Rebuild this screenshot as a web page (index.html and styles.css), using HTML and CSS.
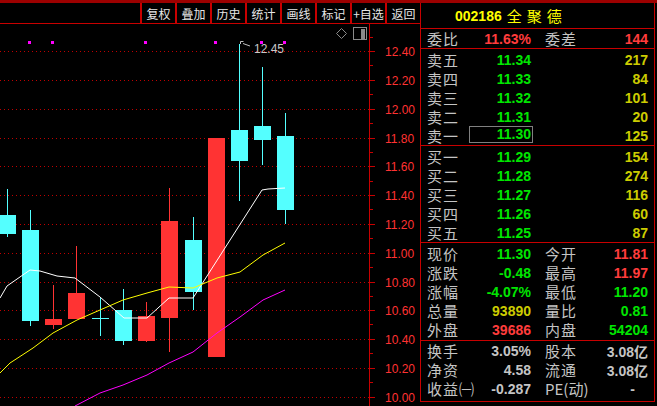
FILE: index.html
```html
<!DOCTYPE html>
<html lang="zh-CN">
<head>
  <meta charset="UTF-8">
  <title>全聚德 日线</title>
  <link rel="stylesheet" href="styles.css">
</head>
<body>

<div class="topbar"></div>
<div class="main">
  <div class="chart-col">
    <div class="toolbar">
      <div class="btn">复权</div>
      <div class="btn">叠加</div>
      <div class="btn">历史</div>
      <div class="btn">统计</div>
      <div class="btn">画线</div>
      <div class="btn">标记</div>
      <div class="btn">+自选</div>
      <div class="btn">返回</div>
    </div>

    <svg class="chart" width="420" height="382" viewBox="0 24 420 382">
      <!-- dotted price grid -->
      <g class="grid">
        <line x1="0" x2="369" y1="51.5" y2="51.5"/>
        <line x1="0" x2="369" y1="80.5" y2="80.5"/>
        <line x1="0" x2="369" y1="109.5" y2="109.5"/>
        <line x1="0" x2="369" y1="138.5" y2="138.5"/>
        <line x1="0" x2="369" y1="166.5" y2="166.5"/>
        <line x1="0" x2="369" y1="195.5" y2="195.5"/>
        <line x1="0" x2="369" y1="224.5" y2="224.5"/>
        <line x1="0" x2="369" y1="253.5" y2="253.5"/>
        <line x1="0" x2="369" y1="282.5" y2="282.5"/>
        <line x1="0" x2="369" y1="310.5" y2="310.5"/>
        <line x1="0" x2="369" y1="339.5" y2="339.5"/>
        <line x1="0" x2="369" y1="368.5" y2="368.5"/>
        <line x1="0" x2="369" y1="397.5" y2="397.5"/>
      </g>

      <!-- price axis -->
      <g class="axis">
        <line x1="369.5" x2="369.5" y1="24" y2="406"/>
        <path d="M369 51.5h6M369 80.5h6M369 109.5h6M369 138.5h6M369 166.5h6M369 195.5h6M369 224.5h6M369 253.5h6M369 282.5h6M369 310.5h6M369 339.5h6M369 368.5h6M369 397.5h6"/>
        <path d="M369 37.5h4M369 65.5h4M369 94.5h4M369 123.5h4M369 152.5h4M369 181.5h4M369 209.5h4M369 238.5h4M369 267.5h4M369 296.5h4M369 324.5h4M369 353.5h4M369 382.5h4"/>
      </g>
      <g class="prices">
        <text x="385" y="56">12.40</text>
        <text x="385" y="85">12.20</text>
        <text x="385" y="114">12.00</text>
        <text x="385" y="143">11.80</text>
        <text x="385" y="171">11.60</text>
        <text x="385" y="200">11.40</text>
        <text x="385" y="229">11.20</text>
        <text x="385" y="258">11.00</text>
        <text x="385" y="287">10.80</text>
        <text x="385" y="315">10.60</text>
        <text x="385" y="344">10.40</text>
        <text x="385" y="373">10.20</text>
        <text x="385" y="402">10.00</text>
      </g>

      <!-- corner icons -->
      <polygon class="icon" points="341.5,28.5 346.5,33.5 341.5,38.5 336.5,33.5"/>
      <rect class="icon" x="353.5" y="27.5" width="13" height="12"/>
      <rect class="icon-fill" x="361" y="29" width="4" height="10"/>

      <!-- signal marks -->
      <g class="marks">
        <rect x="28" y="41" width="3" height="3"/>
        <rect x="51" y="41" width="3" height="3"/>
        <rect x="144" y="41" width="3" height="3"/>
        <rect x="214" y="41" width="3" height="3"/>
        <rect x="260" y="41" width="3" height="3"/>
        <rect x="283" y="41" width="3" height="3"/>
      </g>

      <!-- candles -->
      <g class="down">
        <line x1="7.5" x2="7.5" y1="189" y2="237"/>
        <rect x="-1" y="215" width="17" height="19"/>
        <line x1="30.5" x2="30.5" y1="210" y2="326"/>
        <rect x="22" y="230" width="17" height="91"/>
        <line x1="100.5" x2="100.5" y1="297" y2="336"/>
        <line x1="92" x2="109" y1="318.5" y2="318.5"/>
        <line x1="123.5" x2="123.5" y1="289" y2="345"/>
        <rect x="115" y="310" width="17" height="31"/>
        <line x1="193.5" x2="193.5" y1="217" y2="310"/>
        <rect x="185" y="240" width="17" height="52"/>
        <line x1="239.5" x2="239.5" y1="44" y2="201"/>
        <rect x="231" y="130" width="17" height="31"/>
        <line x1="262.5" x2="262.5" y1="67" y2="165"/>
        <rect x="254" y="126" width="17" height="14"/>
        <line x1="285.5" x2="285.5" y1="113" y2="224"/>
        <rect x="277" y="136" width="17" height="74"/>
      </g>
      <g class="up">
        <line x1="53.5" x2="53.5" y1="285" y2="329"/>
        <rect x="45" y="319" width="17" height="6"/>
        <line x1="76.5" x2="76.5" y1="246" y2="319"/>
        <rect x="68" y="293" width="17" height="26"/>
        <line x1="146.5" x2="146.5" y1="302" y2="342"/>
        <rect x="138" y="316" width="17" height="25"/>
        <line x1="169.5" x2="169.5" y1="188" y2="352"/>
        <rect x="161" y="221" width="17" height="97"/>
        <rect x="208" y="138" width="17" height="219"/>
      </g>

      <!-- moving averages -->
      <polyline class="ma5" points="0,298 7,286 30,270 40,271 57,276 75,278 100,297 124,318 147,318 169,298 193,298 262,190 268,189 285,188"/>
      <polyline class="ma10" points="0,373 10,363 33,348 53,333 77,320 100,310 123,300 147,293 169,287 193,288 217,278 240,272 263,255 285,243"/>
      <polyline class="ma20" points="75,406 100,393 123,385 147,375 169,363 193,352 217,333 240,317 263,300 285,290"/>

      <!-- high marker -->
      <path class="hi-mark" d="M240.5 44V41.5H243.5M243 43.5L250 46"/>
      <text class="hi-text" x="254" y="53">12.45</text>
    </svg>
  </div>

  <div class="quote">
    <div class="q-head">
      <span class="code">002186</span><span class="name">全聚德</span>
    </div>

    <div class="q-sec">
      <div class="q-row"><span class="lbl">委比</span><span class="val red">11.63%</span><span class="lbl2">委差</span><span class="val2 red">144</span></div>
    </div>

    <div class="q-sec pad">
      <div class="q-row"><span class="lbl">卖五</span><span class="val green">11.34</span><span class="lbl2"></span><span class="val2 vol">217</span></div>
      <div class="q-row"><span class="lbl">卖四</span><span class="val green">11.33</span><span class="lbl2"></span><span class="val2 vol">84</span></div>
      <div class="q-row"><span class="lbl">卖三</span><span class="val green">11.32</span><span class="lbl2"></span><span class="val2 vol">101</span></div>
      <div class="q-row"><span class="lbl">卖二</span><span class="val green">11.31</span><span class="lbl2"></span><span class="val2 vol">20</span></div>
      <div class="q-row"><span class="lbl">卖一</span><span class="val green boxed">11.30</span><span class="lbl2"></span><span class="val2 vol">125</span></div>
    </div>

    <div class="q-sec pad">
      <div class="q-row"><span class="lbl">买一</span><span class="val green">11.29</span><span class="lbl2"></span><span class="val2 vol">154</span></div>
      <div class="q-row"><span class="lbl">买二</span><span class="val green">11.28</span><span class="lbl2"></span><span class="val2 vol">274</span></div>
      <div class="q-row"><span class="lbl">买三</span><span class="val green">11.27</span><span class="lbl2"></span><span class="val2 vol">116</span></div>
      <div class="q-row"><span class="lbl">买四</span><span class="val green">11.26</span><span class="lbl2"></span><span class="val2 vol">60</span></div>
      <div class="q-row"><span class="lbl">买五</span><span class="val green">11.25</span><span class="lbl2"></span><span class="val2 vol">87</span></div>
    </div>

    <div class="q-sec pad2">
      <div class="q-row"><span class="lbl">现价</span><span class="val green">11.30</span><span class="lbl2">今开</span><span class="val2 red">11.81</span></div>
      <div class="q-row"><span class="lbl">涨跌</span><span class="val green">-0.48</span><span class="lbl2">最高</span><span class="val2 red">11.97</span></div>
      <div class="q-row"><span class="lbl">涨幅</span><span class="val green">-4.07%</span><span class="lbl2">最低</span><span class="val2 green">11.20</span></div>
      <div class="q-row"><span class="lbl">总量</span><span class="val vol">93890</span><span class="lbl2">量比</span><span class="val2 green">0.81</span></div>
      <div class="q-row"><span class="lbl">外盘</span><span class="val red">39686</span><span class="lbl2">内盘</span><span class="val2 green">54204</span></div>
    </div>

    <div class="q-sec pad3">
      <div class="q-row"><span class="lbl">换手</span><span class="val gray">3.05%</span><span class="lbl2">股本</span><span class="val2 gray">3.08亿</span></div>
      <div class="q-row"><span class="lbl">净资</span><span class="val gray">4.58</span><span class="lbl2">流通</span><span class="val2 gray">3.08亿</span></div>
      <div class="q-row"><span class="lbl">收益㈠</span><span class="val gray">-0.287</span><span class="lbl2 tight">PE(动)</span><span class="val2 gray dash">-</span></div>
    </div>
  </div>
</div>

</body>
</html>
```

FILE: styles.css
```css
* {
  box-sizing: border-box;
  margin: 0;
  padding: 0;
}
body {
  background: #000;
  width: 657px;
  height: 406px;
  overflow: hidden;
  font-family: "Liberation Sans", "Noto Sans CJK SC", sans-serif;
}
.topbar {
  height: 3px;
  background: #9c0000;
}
.main {
  display: flex;
  height: 403px;
}
.chart-col {
  width: 420px;
}
.toolbar {
  height: 21px;
  border-bottom: 1px solid #c80000;
  display: flex;
  justify-content: flex-end;
}
.toolbar .btn {
  width: 35px;
  border-left: 2px solid #c80000;
  color: #e6e6e6;
  font: 12px "Noto Sans CJK SC", sans-serif;
  white-space: nowrap;
  display: flex;
  align-items: center;
  justify-content: center;
}
.chart {
  display: block;
}
.grid line {
  stroke: #c00000;
  stroke-dasharray: 1 3;
}
.axis line, .axis path {
  stroke: #c80000;
  fill: none;
}
.prices text {
  fill: #ff3232;
  font: 12px "Liberation Sans", sans-serif;
}
.icon {
  fill: none;
  stroke: #8a8a8a;
}
.icon-fill {
  fill: #8a8a8a;
}
.marks rect {
  fill: #ff00ff;
}
.down line, .up line, .down rect, .up rect {
  shape-rendering: crispEdges;
}
.down line {
  stroke: #54ffff;
}
.down rect {
  fill: #54ffff;
}
.up line {
  stroke: #ff3333;
}
.up rect {
  fill: #ff3333;
}
.ma5, .ma10, .ma20 {
  fill: none;
  stroke-width: 1;
}
.ma5 { stroke: #ffffff; }
.ma10 { stroke: #ffff00; }
.ma20 { stroke: #ff00ff; }
.hi-mark {
  fill: none;
  stroke: #c0c0c0;
}
.hi-text {
  fill: #c8c8c8;
  font: 12px "Liberation Sans", sans-serif;
}

/* quote panel */
.quote {
  width: 235px;
  height: 399px;
  border-left: 1px solid #c80000;
  border-right: 1px solid #c80000;
  border-bottom: 1px solid #c80000;
  padding: 0 6px;
}
.q-head {
  height: 26px;
  margin: 0 -6px;
  padding-left: 34px;
  border-bottom: 1px solid #c80000;
  display: flex;
  align-items: center;
  color: #ffff00;
}
.q-head .code {
  font-weight: bold;
  font-size: 14px;
}
.q-head .name {
  margin-left: 5px;
  font: 15px "Noto Sans CJK SC", sans-serif;
  letter-spacing: 5px;
}
.q-sec {
  margin: 0 -6px;
  padding: 0 6px;
  border-bottom: 1px solid #c80000;
}
.q-sec:last-child {
  border-bottom: none;
}
.pad { padding-top: 1px; }
.pad2 { padding-top: 1px; padding-bottom: 1px; }
.pad3 { padding-top: 0; }
.q-row {
  height: 19px;
  display: flex;
  align-items: center;
}
.lbl, .lbl2 {
  color: #c4c4c4;
  font: 15px "Noto Sans CJK SC", sans-serif;
  letter-spacing: 1px;
  white-space: nowrap;
}
.lbl {
  width: 40px;
}
.lbl2 {
  flex: 1;
  margin-left: 14px;
}
.lbl2.tight {
  letter-spacing: 0;
}
.val, .val2 {
  font-weight: bold;
  font-size: 14px;
  text-align: right;
  white-space: nowrap;
}
.val {
  width: 64px;
}
.boxed {
  margin-left: 2px;
  height: 17px;
  align-self: flex-start;
  border: 1px solid #808080;
  padding-right: 1px;
  line-height: 15px;
}
.boxed + .lbl2 {
  margin-left: 12px;
}
.dash {
  padding-right: 13px;
}
.red { color: #ff3c3c; }
.green { color: #00e600; }
.vol { color: #cccc00; }
.gray { color: #c4c4c4; }
```
